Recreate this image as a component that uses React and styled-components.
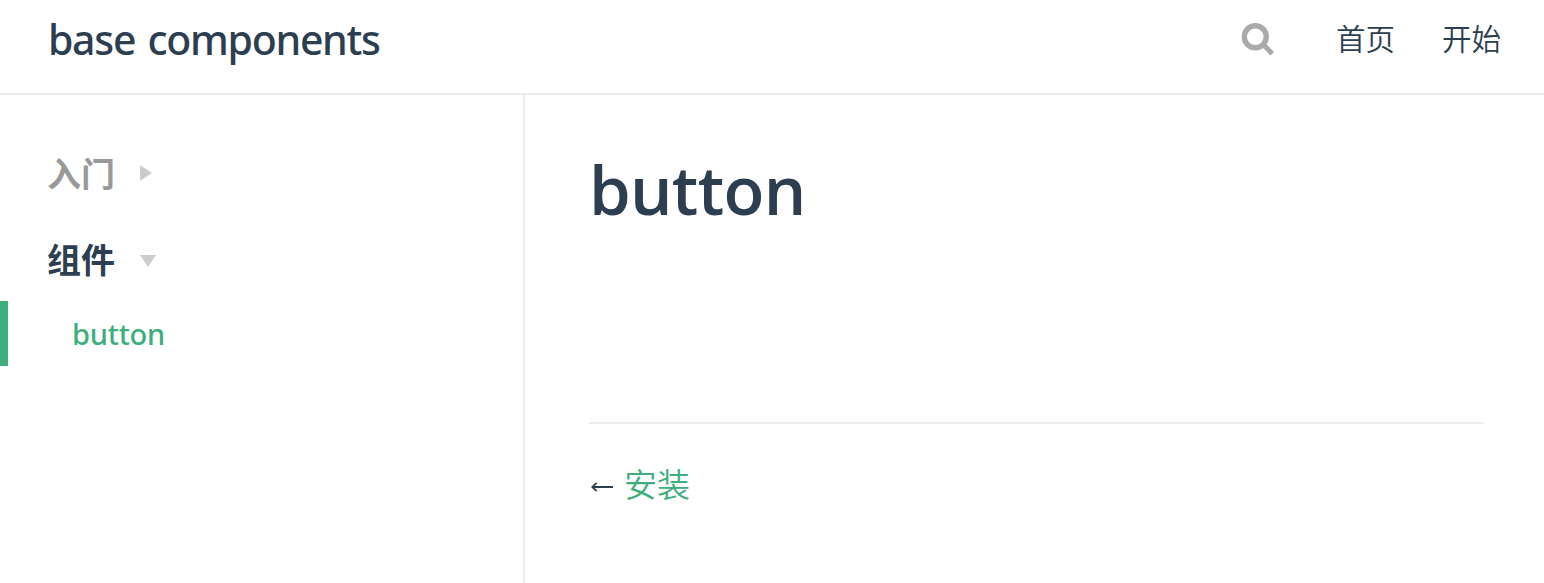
import React from "react";
import styled, { createGlobalStyle } from "styled-components";

const Global = createGlobalStyle`
  *, *::before, *::after { box-sizing: border-box; }
  body { margin: 0; background: #fff; color: #2c3e50; overflow: hidden;
    font-family: "Open Sans", "Noto Sans CJK SC", sans-serif; }
`;

const Page = styled.div`
  height: 583px;
  display: flex;
  flex-direction: column;
`;
const Navbar = styled.header`
  height: 95px;
  flex: none;
  display: flex;
  justify-content: space-between;
  padding: 0 43px 0 48px;
  border-bottom: 2px solid #eaecef;
`;
const SiteName = styled.a`
  font: 500 41px/78px "Noto Sans", sans-serif;
  letter-spacing: -1.3px;
  word-spacing: 3px;
  white-space: nowrap;
`;
const NavLinks = styled.nav`
  display: flex;
  align-items: flex-start;
`;
const SearchIcon = styled.svg`
  width: 34px;
  height: 34px;
  margin: 22px 61px 0 0;
`;
const NavLink = styled.a`
  font: 350 29.5px/74px "Noto Sans CJK SC", sans-serif;
  margin-left: ${(p) => (p.$first ? 0 : 47)}px;
`;
const Body = styled.div`
  flex: 1;
  display: flex;
  min-height: 0;
`;
const Sidebar = styled.aside`
  width: 525px;
  flex: none;
  border-right: 2px solid #eaecef;
  padding-top: 48px;
`;
const Group = styled.div`
  display: flex;
  align-items: center;
  height: 60px;
  margin-bottom: ${(p) => (p.$open ? 12 : 26)}px;
  padding-left: 47px;
  gap: 25px;
  font: 700 34px/60px "Noto Sans CJK SC", sans-serif;
  color: ${(p) => (p.$open ? "#2c3e50" : "#999")};
`;
const GroupName = styled.span`
  height: 60px;
`;
const Arrow = styled.svg`
  display: block;
  margin-top: ${(p) => p.$drop || 0}px;
`;
const ActiveItem = styled.a`
  display: block;
  height: 65px;
  border-left: 8px solid #3eaf7c;
  padding-left: 64px;
  color: #3eaf7c;
  font: 500 29px/66px "Noto Sans", sans-serif;
  letter-spacing: -0.2px;
`;
const Content = styled.main`
  flex: 1;
  padding: 40px 60px 0 64px;
`;
const Title = styled.h1`
  margin: 0;
  height: 287px;
  font: 560 67px/108px "Open Sans", sans-serif;
  letter-spacing: -0.7px;
`;
const PageNav = styled.div`
  border-top: 2px solid #eaecef;
  padding-top: 32px;
  display: flex;
  align-items: flex-start;
  font: 350 33px/55px "Noto Sans CJK SC", sans-serif;
`;
const Back = styled.svg`
  margin: 24px 11px 0 0;
`;
const PrevLink = styled.a`
  color: #3eaf7c;
`;

export default function App() {
  return (
    <Page>
      <Global />
      <Navbar>
        <SiteName>base components</SiteName>
        <NavLinks>
          <SearchIcon viewBox="0 0 34 34" fill="none" stroke="#aaa">
            <circle cx="14.3" cy="14.8" r="11" strokeWidth="5.4" />
            <path d="M21.5 21.5 31.2 31.8" strokeWidth="5" />
          </SearchIcon>
          <NavLink $first>首页</NavLink>
          <NavLink>开始</NavLink>
        </NavLinks>
      </Navbar>
      <Body>
        <Sidebar>
          <Group>
            <GroupName>入门</GroupName>
            <Arrow width="12" height="16"><path d="M0 0 12 8 0 16Z" fill="#ccc" /></Arrow>
          </Group>
          <Group $open>
            <GroupName>组件</GroupName>
            <Arrow $drop={4} width="16" height="12"><path d="M0 0H16L8 12Z" fill="#ccc" /></Arrow>
          </Group>
          <ActiveItem>button</ActiveItem>
        </Sidebar>
        <Content>
          <Title>button</Title>
          <PageNav>
            <Back width="24" height="14" fill="none" stroke="#2c3e50" strokeWidth="1.8">
              <path d="M24 7H3.5M7.5 2.8 3.3 7 7.5 11.2" />
            </Back>
            <PrevLink>安装</PrevLink>
          </PageNav>
        </Content>
      </Body>
    </Page>
  );
}
